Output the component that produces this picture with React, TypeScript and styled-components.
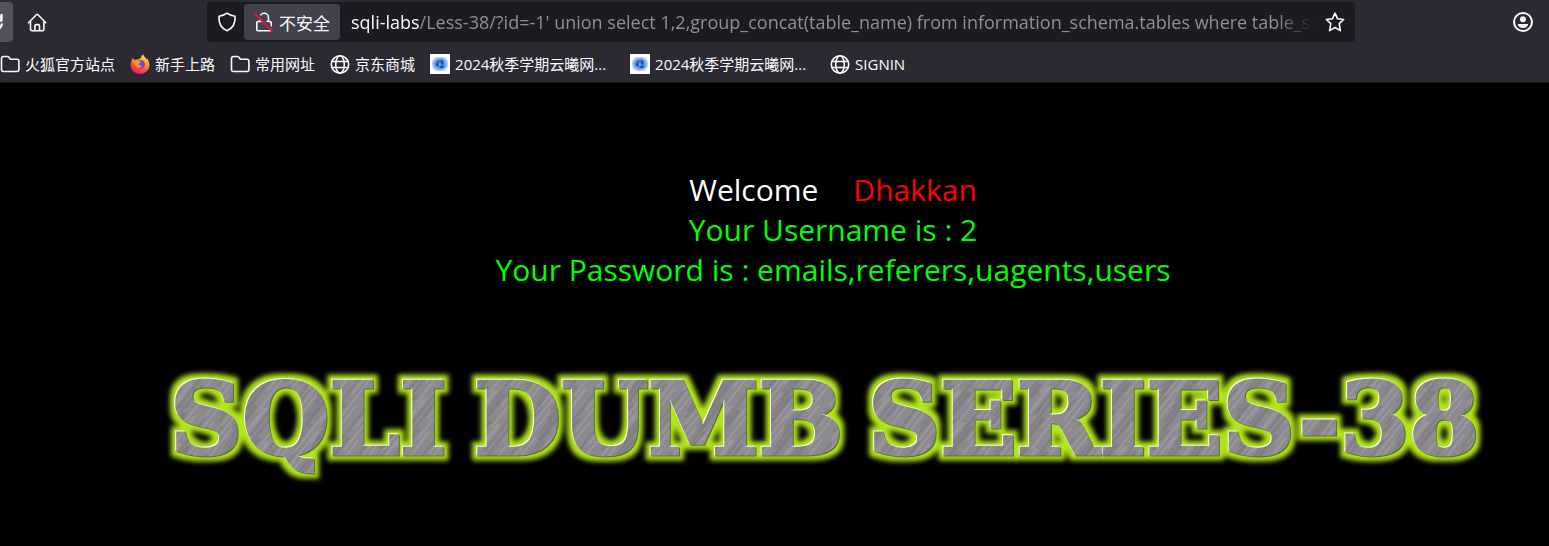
import React from "react";
import styled, { createGlobalStyle } from "styled-components";

const uiFont = `"Open Sans", "Noto Sans CJK SC", sans-serif`;

const GlobalStyle = createGlobalStyle`
  * { box-sizing: border-box; }
  body { margin: 0; background: #000; font-family: ${uiFont}; overflow-x: hidden; }
`;

const Chrome = styled.header`
  background: #2b2a33;
  border-bottom: 1px solid #1c1b22;
  color: #fbfbfe;
  overflow: hidden;
`;

const Toolbar = styled.div`
  display: flex;
  align-items: center;
  padding: 2px 10px 2px 0;
`;

const NavGroup = styled.nav`
  display: flex;
  align-items: center;
  width: 207px;
  flex: none;
`;

const EndGroup = styled.div`
  display: flex;
  justify-content: flex-end;
  width: 184px;
  flex: none;
`;

const ToolButton = styled.button<{ $active?: boolean }>`
  display: flex;
  align-items: center;
  justify-content: center;
  width: 40px;
  height: 40px;
  padding: 0;
  border: 0;
  border-radius: 4px;
  background: ${(p) => (p.$active ? "#52525e" : "transparent")};
  color: inherit;
`;

const ReloadButton = styled(ToolButton)`
  margin: 0 4px 0 -27px;
`;

const EndButton = styled(ToolButton)`
  width: 32px;
`;

const UrlBar = styled.div`
  display: flex;
  align-items: center;
  flex: 1;
  min-width: 0;
  height: 40px;
  padding: 0 0 0 2px;
  border-radius: 4px;
  background: #1c1b22;
`;

const ShieldButton = styled(ToolButton)`
  width: 35px;
`;

const SecurityButton = styled.button`
  display: flex;
  align-items: center;
  gap: 5px;
  height: 36px;
  padding: 0 10px;
  margin-right: 11px;
  border: 0;
  border-radius: 4px;
  background: #42414d;
  color: inherit;
  font: 17px ${uiFont};
  white-space: nowrap;
`;

const Address = styled.label`
  display: flex;
  align-items: center;
  flex: 1;
  min-width: 0;
  font: 18px/24px ${uiFont};
  mask-image: linear-gradient(to left, transparent, #000 40px);
`;

const AddressPath = styled.input`
  flex: 1;
  min-width: 0;
  padding: 0;
  border: 0;
  outline: 0;
  background: transparent;
  color: #8f8f94;
  font: inherit;
`;

const Bookmarks = styled.nav`
  display: flex;
  align-items: center;
  gap: 15px;
  height: 38px;
  padding-top: 2px;
  font-size: 15px;
  line-height: 20px;
`;

const Bookmark = styled.a<{ $wide?: boolean }>`
  display: flex;
  align-items: center;
  gap: 5px;
  width: ${(p) => (p.$wide ? "185px" : "auto")};
  color: inherit;
  text-decoration: none;
  white-space: nowrap;
`;

const BookmarkTitle = styled.span`
  overflow: hidden;
  text-overflow: ellipsis;
`;

const Icon = styled.svg`
  display: block;
  flex: none;
  width: 20px;
  height: 20px;
  fill: none;
  stroke: currentColor;
  stroke-width: 1.6;
  stroke-linecap: round;
  stroke-linejoin: round;
`;

const Page = styled.main`
  padding: 87px 0 0 117px;
  text-align: center;
`;

const Message = styled.div`
  font-size: 30px;
  line-height: 40px;
  color: #0f0;
`;

const Greeting = styled.p`
  display: flex;
  justify-content: center;
  gap: 35px;
  margin: 0;
  color: #fff;
`;

const Name = styled.span`
  color: #f00;
`;

const Line = styled.p`
  margin: 0;
`;

const Banner = styled.svg`
  display: block;
  width: 100%;
  max-width: 1432px;
  margin: 66px auto 0;
`;

const BannerText = styled.text`
  font: bold 100px "DejaVu Serif", serif;
  stroke-width: 3;
`;

const Reload = () => (
  <Icon viewBox="0 0 20 20">
    <path d="M18.500 3v5.500H13M18.800 12.500a8 8 0 1 1-2-7.500" strokeWidth="2.400" />
  </Icon>
);

const Home = () => (
  <Icon viewBox="0 0 20 20">
    <path d="M1.500 10.800 9.400 2.800q.8-.8 1.600 0l7.800 8M3.500 9.500v7.700q0 1.600 1.600 1.600h10.200q1.600 0 1.600-1.600V9.500M7.900 18.600v-4.500q0-1.500 1.500-1.500H11q1.500 0 1.500 1.500v4.500" />
  </Icon>
);

const Shield = () => (
  <Icon viewBox="0 0 20 20">
    <path d="M10 1.200Q13 3.600 18 4.200c.6 6.500-1.500 11.500-8 14.600C3.500 15.700 1.400 10.700 2 4.200 7 3.600 10 1.200 10 1.200Z" />
  </Icon>
);

const Lock = () => (
  <Icon viewBox="0 0 20 20">
    <path d="M6 9V5.500a4 4 0 0 1 8.500 0V9M4 9.500h12q1.200 0 1.200 1.200v6.700q0 1.400-1.400 1.400H4.200q-1.400 0-1.400-1.400v-6.700Q2.800 9.500 4 9.500Z" />
    <path d="m3.500 2 15.500 15.500" stroke="#42414d" strokeWidth="2" />
    <path d="m1.500 2.500 16.500 16.500" stroke="#e2153f" strokeWidth="1.800" />
  </Icon>
);

const Star = () => (
  <Icon viewBox="0 0 20 20">
    <path d="m10 1.200 2.600 5.600 6.100.7-4.500 4.200 1.200 6.900L10 15.500l-5.400 3.100 1.200-6.900L1.300 7.500l6.100-.7Z" />
  </Icon>
);

const Account = () => (
  <Icon viewBox="0 0 20 20">
    <circle cx="10" cy="10" r="9" strokeWidth="2" />
    <circle cx="10" cy="7.300" r="3" fill="currentColor" stroke="none" />
    <path d="M4.800 12h10.400q-.8 4-5.200 4t-5.200-4Z" fill="currentColor" stroke="none" />
  </Icon>
);

const Folder = () => (
  <Icon viewBox="0 0 20 20">
    <path d="M1.500 15.500V4.500q0-2 2-2h3.700q1 0 1.500.6l1.700 2.100h6.500q2 0 2 2v8.300q0 2-2 2H3.500q-2 0-2-2Z" />
  </Icon>
);

const Globe = () => (
  <Icon viewBox="0 0 20 20">
    <circle cx="10" cy="10.500" r="8.700" />
    <ellipse cx="10" cy="10.500" rx="4.300" ry="8.700" />
    <path d="M1.800 7.500h16.400M1.800 13.500h16.400" />
  </Icon>
);

const Firefox = () => (
  <Icon viewBox="0 0 20 20">
    <defs>
      <linearGradient id="flame" x1=".8" y1="0" x2=".3" y2="1">
        <stop offset="0" stopColor="#fff44f" />
        <stop offset=".35" stopColor="#ffa52a" />
        <stop offset=".65" stopColor="#ff5634" />
        <stop offset="1" stopColor="#f0127a" />
      </linearGradient>
    </defs>
    <g stroke="none">
      <path d="M2.800 4 4.500 6l3-.5L11 4Q11 1.800 13 .2q.8 2.200 2.600 3.500l1 1.800.5-1.300c3.500 5.600 2.700 10-.1 12.800C13.500 20.600 7 21 3.200 17.300-.5 13.700.2 8 2.800 4Z" fill="url(#flame)" />
      <circle cx="10.500" cy="10.300" r="4.300" fill="#7542e5" />
      <path d="M3.500 7q3-2.500 6 .2l1.700.5q-.2 1.600-2.600 2 .5 2.800 3.600 1.800-1.800 3.400-4.800 2Q4.200 12 3.500 7Z" fill="#ff980e" />
    </g>
  </Icon>
);

const Cloud = () => (
  <Icon viewBox="0 0 20 20">
    <defs>
      <radialGradient id="haze">
        <stop offset="0" stopColor="#2b62bd" />
        <stop offset=".5" stopColor="#4484dd" />
        <stop offset=".8" stopColor="#86b6f1" />
        <stop offset="1" stopColor="#c4dcf8" />
      </radialGradient>
    </defs>
    <g stroke="none">
      <path d="M0 0h20v20H0z" fill="#fff" />
      <rect x="2" y="3" width="16" height="14" rx="5" fill="url(#haze)" />
      <path d="M6 9h2v3H6zM11 6h2v4h-2zM10 12h4v2h-4zM7 7h2v1H7z" fill="#123a82" opacity=".65" />
      <path d="M9 9h2v3H9zM5 13h3v1H5zM15 8h1v3h-1z" fill="#a9d0ff" opacity=".6" />
    </g>
  </Icon>
);

const scratches = Array.from({ length: 60 }, (_, i) => ({
  x: (i * 37) % 97,
  y: (i * 53) % 131,
  length: 18 + ((i * 29) % 60),
  light: i % 2 === 0,
}));

const bannerWords = [
  { text: "SQLI", x: 53 },
  { text: "DUMB", x: 357 },
  { text: "SERIES-38", x: 751 },
];

const SteelBanner = () => (
  <Banner viewBox="0 0 1432 150" role="img" aria-label="SQLI DUMB SERIES-38">
    <defs>
      <pattern id="steel" width="97" height="131" patternUnits="userSpaceOnUse" patternTransform="rotate(38)">
        <path d="M0 0h97v131H0z" fill="#8c8a8e" />
        {scratches.map((s, i) => (
          <path
            key={i}
            d={`M${s.x} ${s.y}v${s.length}M${s.x} ${s.y - 131}v${s.length}`}
            stroke={s.light ? "#b5b3b8" : "#656368"}
            strokeWidth="1"
            opacity=".6"
          />
        ))}
      </pattern>
      <filter id="neon" x="-5%" y="-30%" width="110%" height="170%" colorInterpolationFilters="sRGB">
        <feMorphology in="SourceAlpha" operator="dilate" radius="5" result="wide" />
        <feGaussianBlur in="wide" stdDeviation="2.500" result="soft" />
        <feFlood floodColor="#b2e61c" />
        <feComposite in2="soft" operator="in" result="glow" />
        <feOffset in="SourceAlpha" dx="-1" dy="-1" result="up" />
        <feFlood floodColor="#fbfff0" />
        <feComposite in2="up" operator="in" result="shine" />
        <feOffset in="SourceAlpha" dx="1" dy="1" result="down" />
        <feFlood floodColor="#5c731d" />
        <feComposite in2="down" operator="in" result="shade" />
        <feMerge>
          <feMergeNode in="glow" />
          <feMergeNode in="shade" />
          <feMergeNode in="shine" />
          <feMergeNode in="SourceGraphic" />
        </feMerge>
      </filter>
    </defs>
    <g filter="url(#neon)" fill="url(#steel)" stroke="url(#steel)">
      {bannerWords.map((w) => (
        <BannerText key={w.text} x={w.x} y="98">
          {w.text}
        </BannerText>
      ))}
    </g>
  </Banner>
);

const bookmarks = [
  { title: "火狐官方站点", icon: <Folder /> },
  { title: "新手上路", icon: <Firefox /> },
  { title: "常用网址", icon: <Folder /> },
  { title: "京东商城", icon: <Globe /> },
  { title: "2024秋季学期云曦网...", icon: <Cloud />, wide: true },
  { title: "2024秋季学期云曦网...", icon: <Cloud />, wide: true },
  { title: "SIGNIN", icon: <Globe /> },
];

export default function App() {
  return (
    <>
      <GlobalStyle />
      <Chrome>
        <Toolbar>
          <NavGroup>
            <ReloadButton $active aria-label="Reload"><Reload /></ReloadButton>
            <ToolButton aria-label="Home"><Home /></ToolButton>
          </NavGroup>
          <UrlBar>
            <ShieldButton aria-label="Tracking protection"><Shield /></ShieldButton>
            <SecurityButton><Lock />不安全</SecurityButton>
            <Address>
              sqli-labs
              <AddressPath
                aria-label="Address"
                defaultValue="/Less-38/?id=-1' union select 1,2,group_concat(table_name) from information_schema.tables where table_schema=database()"
              />
            </Address>
            <ToolButton aria-label="Bookmark this page"><Star /></ToolButton>
          </UrlBar>
          <EndGroup>
            <EndButton aria-label="Account"><Account /></EndButton>
          </EndGroup>
        </Toolbar>
        <Bookmarks>
          {bookmarks.map((b, i) => (
            <Bookmark key={i} href="#" $wide={b.wide}>
              {b.icon}
              <BookmarkTitle>{b.title}</BookmarkTitle>
            </Bookmark>
          ))}
        </Bookmarks>
      </Chrome>
      <Page>
        <Message>
          <Greeting>
            <span>Welcome</span>
            <Name>Dhakkan</Name>
          </Greeting>
          <Line>Your Username is : 2</Line>
          <Line>Your Password is : emails,referers,uagents,users</Line>
        </Message>
        <SteelBanner />
      </Page>
    </>
  );
}
